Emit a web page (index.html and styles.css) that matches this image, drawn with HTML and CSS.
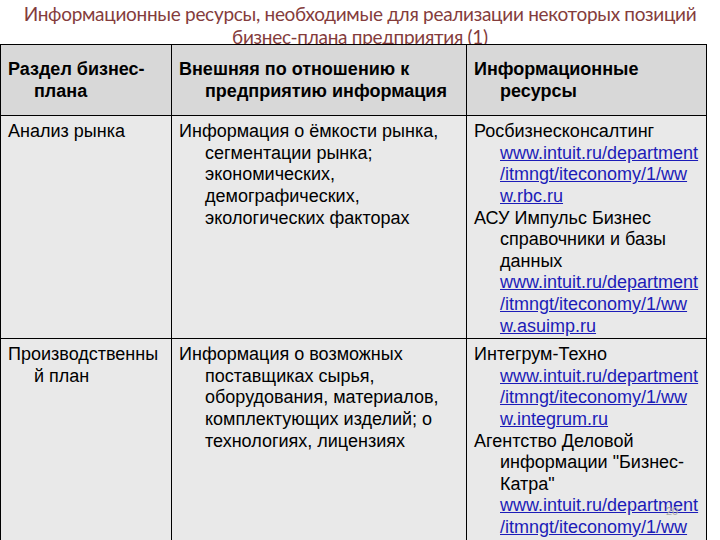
FILE: index.html
```html
<!DOCTYPE html>
<html lang="ru">
<head>
<meta charset="utf-8">
<title>Информационные ресурсы</title>
<link rel="stylesheet" href="styles.css">
</head>
<body>
<div class="slide">
  <h1 class="title">Информационные ресурсы, необходимые для реализации некоторых позиций<br>бизнес-плана предприятия (1)</h1>
  <table class="grid">
    <colgroup>
      <col class="c1"><col class="c2"><col class="c3">
    </colgroup>
    <thead>
      <tr>
        <th><p class="hang">Раздел бизнес-<br>плана</p></th>
        <th><p class="hang">Внешняя по отношению к<br>предприятию информация</p></th>
        <th><p class="hang">Информационные<br>ресурсы</p></th>
      </tr>
    </thead>
    <tbody>
      <tr>
        <td><p class="hang">Анализ рынка</p></td>
        <td><p class="hang">Информация о ёмкости рынка,<br>сегментации рынка;<br>экономических,<br>демографических,<br>экологических факторах</p></td>
        <td>
          <p class="hang">Росбизнесконсалтинг<br><a href="#">www.intuit.ru/department<br>/itmngt/iteconomy/1/ww<br>w.rbc.ru</a></p>
          <p class="hang">АСУ Импульс Бизнес<br>справочники и базы<br>данных<br><a href="#">www.intuit.ru/department<br>/itmngt/iteconomy/1/ww<br>w.asuimp.ru</a></p>
        </td>
      </tr>
      <tr>
        <td><p class="hang">Производственны<br>й план</p></td>
        <td><p class="hang">Информация о возможных<br>поставщиках сырья,<br>оборудования, материалов,<br>комплектующих изделий; о<br>технологиях, лицензиях</p></td>
        <td>
          <p class="hang">Интегрум-Техно<br><a href="#">www.intuit.ru/department<br>/itmngt/iteconomy/1/ww<br>w.integrum.ru</a></p>
          <p class="hang">Агентство Деловой<br>информации "Бизнес-<br>Катра"<br><a href="#">www.intuit.ru/department<br>/itmngt/iteconomy/1/ww<br>w.katra.ru</a></p>
        </td>
      </tr>
    </tbody>
  </table>
  <span class="slide-num">20</span>
</div>
</body>
</html>
```
FILE: styles.css
```css
html, body {
  margin: 0;
  padding: 0;
  background: #ffffff;
}
.slide {
  position: relative;
  width: 720px;
  height: 540px;
  overflow: hidden;
}
.title {
  margin: 0;
  padding-top: 2px;
  height: 42px;
  overflow: hidden;
  font-family: Lato, "Open Sans", sans-serif;
  font-weight: normal;
  font-size: 19px;
  letter-spacing: -0.3px;
  line-height: 23px;
  color: #843c3c;
  text-align: center;
  white-space: nowrap;
}
.grid {
  border-collapse: collapse;
  table-layout: fixed;
  width: 706px;
  font-family: "Liberation Sans", Arial, sans-serif;
  font-size: 18px;
  line-height: 21.6px;
  color: #000000;
}
.c1 { width: 171px; }
.c2 { width: 295px; }
.c3 { width: 240px; }
.grid th, .grid td {
  border: 1px solid #000000;
  vertical-align: top;
  text-align: left;
  white-space: nowrap;
}
.grid th {
  background: #d8d8d8;
  font-weight: bold;
  padding: 14px 7px 13px 7px;
}
.grid td {
  background: #e9e9e9;
  padding: 5px 7px 1px 7px;
}
.hang {
  margin: 0;
  padding-left: 26px;
  text-indent: -26px;
}
.grid a {
  color: #1c1cb8;
  text-decoration: underline;
}
.slide-num {
  position: absolute;
  left: 666px;
  top: 505px;
  font-family: "Liberation Sans", Arial, sans-serif;
  font-size: 11px;
  color: #a8a8a8;
}
```
